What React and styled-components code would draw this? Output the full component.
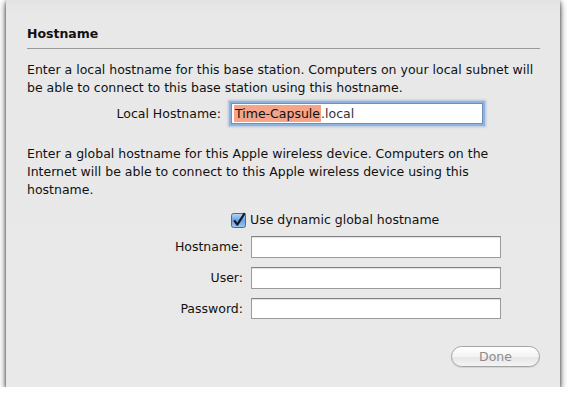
import React from 'react';
import styled, { createGlobalStyle } from 'styled-components';

const Global = createGlobalStyle`
  body {
    margin: 0;
    background: #ffffff;
    font-family: "DejaVu Sans", "Liberation Sans", sans-serif;
  }
`

const Sheet = styled.div`
  box-sizing: border-box;
  width: 554px;
  height: 387px;
  margin-left: 6px;
  padding: 25px 20px 0 21px;
  background: linear-gradient(to bottom, #e2e2e2 0px, #e8e8e8 12px, #e9e9e9 100%);
  box-shadow: 0 3px 7px rgba(0, 0, 0, 0.7), 0 1px 3px rgba(0, 0, 0, 0.45);
  display: flex;
  flex-direction: column;
  color: #111;
  font-size: 12.5px;
`

const Title = styled.div`
  font-weight: bold;
  font-size: 12.5px;
  line-height: 18px;
`

const Rule = styled.div`
  height: 1px;
  background: #9a9a9a;
  margin-top: 5px;
`

const Para = styled.p`
  margin: ${p => p.$top}px 0 0;
  line-height: 18px;
  white-space: nowrap;
`

const Row = styled.div`
  display: flex;
  align-items: center;
  margin-top: ${p => p.$top}px;
`

const Label = styled.div`
  width: ${p => p.$w}px;
  text-align: right;
  margin-right: ${p => p.$gap}px;
  line-height: 18px;
`

const Field = styled.div`
  box-sizing: border-box;
  width: ${p => p.$w}px;
  height: ${p => p.$h}px;
  background: #fff;
  border: 1px solid #9b9b9b;
  border-top-color: #808080;
  box-shadow: inset 0 1px 1px rgba(0, 0, 0, 0.12);
  display: flex;
  align-items: center;
  padding-left: 3px;
  font-size: 12.5px;
`

const FocusField = styled(Field)`
  border: 1px solid #6d8fb8;
  box-shadow: 0 0 0 2px #8fb3de, 0 0 2px 3px rgba(120, 160, 210, 0.5);
  padding-left: 2px;
`

const Selected = styled.span`
  background: #f6a487;
  line-height: 17px;
  padding: 0 1px;
`

const Suffix = styled.span`
  color: #333;
`

const CheckRow = styled.div`
  display: flex;
  align-items: center;
  margin-top: 12px;
  margin-left: 204px;
  line-height: 18px;
  gap: 3px;
`

const Footer = styled.div`
  display: flex;
  justify-content: flex-end;
  margin-top: auto;
  margin-bottom: 20px;
`

const Button = styled.button`
  width: 89px;
  height: 21px;
  border-radius: 11px;
  border: 1px solid #a4a4a4;
  background: linear-gradient(to bottom, #ffffff 0%, #f3f3f3 50%, #e6e6e6 51%, #f4f4f4 100%);
  box-shadow: 0 1px 1px rgba(0, 0, 0, 0.1);
  color: #8c8c8c;
  font-family: "DejaVu Sans", "Liberation Sans", sans-serif;
  font-size: 12.5px;
  padding: 0;
`

const Checkbox = () => (
  <svg width="16" height="16" viewBox="0 0 16 16">
    <defs>
      <linearGradient id="cb" x1="0" y1="0" x2="0" y2="1">
        <stop offset="0" stopColor="#b9d6f4" />
        <stop offset="0.5" stopColor="#6aa3e0" />
        <stop offset="1" stopColor="#9cc8f2" />
      </linearGradient>
    </defs>
    <rect x="0.5" y="1.5" width="14" height="14" rx="2" fill="url(#cb)" stroke="#4a6b95" />
    <path d="M3.2 8.3 L6.3 12.6 L13.8 1.2" fill="none" stroke="#0d1a2a" strokeWidth="2.2" strokeLinejoin="round" />
  </svg>
)

export default function App() {
  return (
    <>
      <Global />
      <Sheet>
        <Title>Hostname</Title>
        <Rule />
        <Para $top={12}>
          Enter a local hostname for this base station. Computers on your local subnet will<br />
          be able to connect to this base station using this hostname.
        </Para>
        <Row $top={6}>
          <Label $w={194} $gap={10}>Local Hostname:</Label>
          <FocusField $w={252} $h={21}>
            <Selected>Time-Capsule</Selected>
            <Suffix>.local</Suffix>
          </FocusField>
        </Row>
        <Para $top={21}>
          Enter a global hostname for this Apple wireless device. Computers on the<br />
          Internet will be able to connect to this Apple wireless device using this<br />
          hostname.
        </Para>
        <CheckRow>
          <Checkbox />
          Use dynamic global hostname
        </CheckRow>
        <Row $top={7}>
          <Label $w={216} $gap={8}>Hostname:</Label>
          <Field $w={250} $h={22} />
        </Row>
        <Row $top={9}>
          <Label $w={216} $gap={8}>User:</Label>
          <Field $w={250} $h={22} />
        </Row>
        <Row $top={9}>
          <Label $w={216} $gap={8}>Password:</Label>
          <Field $w={250} $h={21} />
        </Row>
        <Footer>
          <Button>Done</Button>
        </Footer>
      </Sheet>
    </>
  )
}
